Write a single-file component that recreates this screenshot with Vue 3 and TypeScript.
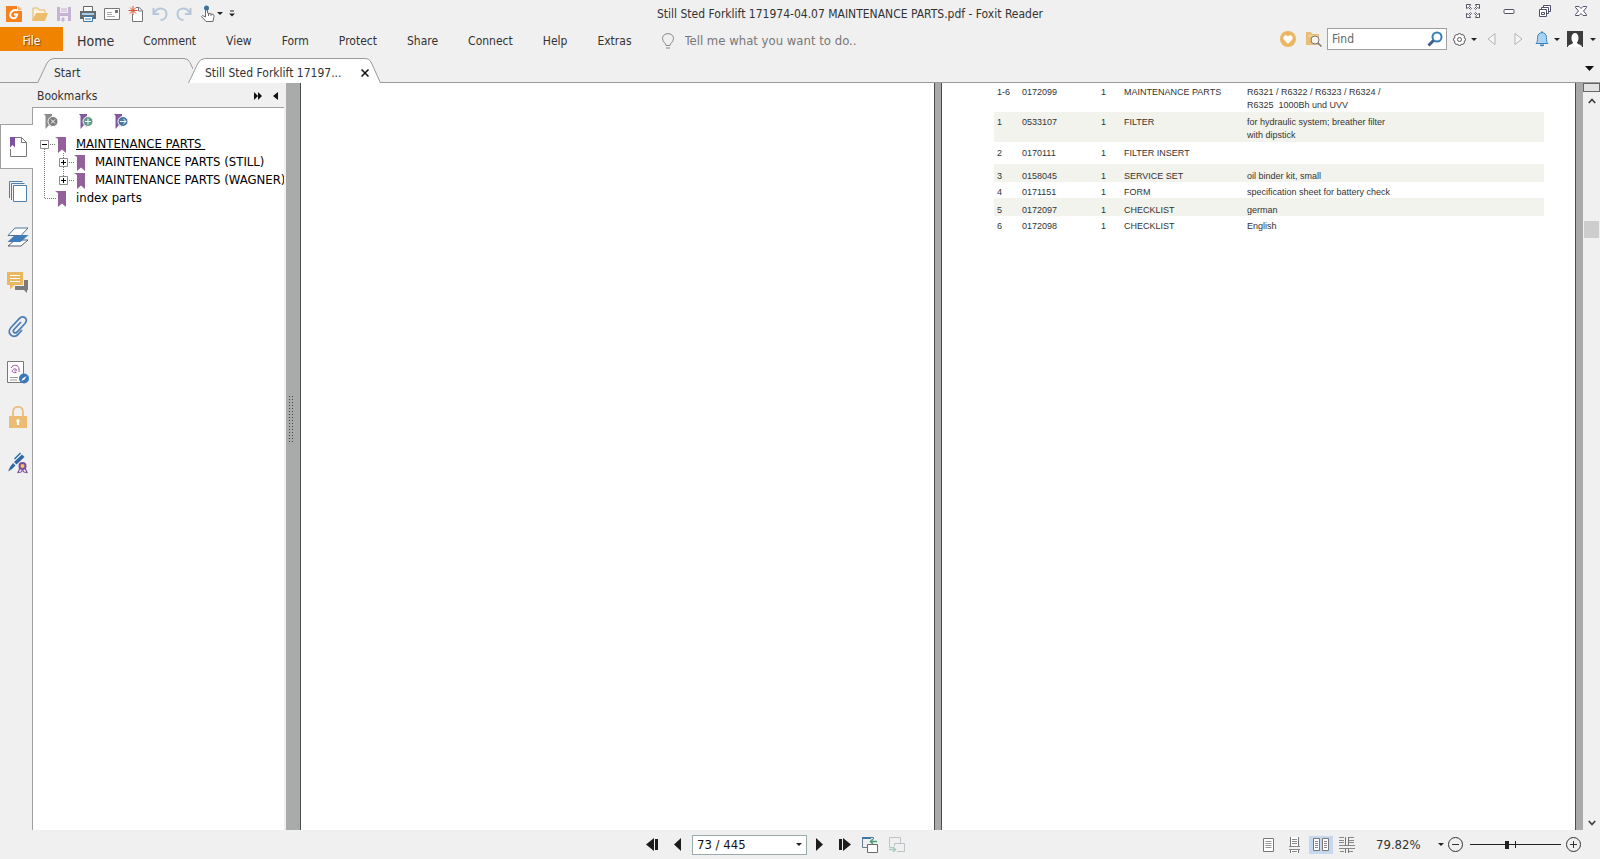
<script setup lang="ts">
import { ref } from 'vue'

interface PartRow {
  pos: string
  part: string
  qty: string
  name: string
  note: string[]
  size: string
}

const menus = ['Comment', 'View', 'Form', 'Protect', 'Share', 'Connect', 'Help', 'Extras']
const tell = ref('')
const find = ref('')
const zoom = ref(40)

const parts: PartRow[] = [
  { pos: '1-6', part: '0172099', qty: '1', name: 'MAINTENANCE PARTS', note: ['R6321 / R6322 / R6323 / R6324 /', 'R6325  1000Bh und UVV'], size: 'first' },
  { pos: '1', part: '0533107', qty: '1', name: 'FILTER', note: ['for hydraulic system; breather filter', 'with dipstick'], size: 'double' },
  { pos: '2', part: '0170111', qty: '1', name: 'FILTER INSERT', note: [], size: 'tall' },
  { pos: '3', part: '0158045', qty: '1', name: 'SERVICE SET', note: ['oil binder kit, small'], size: 'single' },
  { pos: '4', part: '0171151', qty: '1', name: 'FORM', note: ['specification sheet for battery check'], size: 'tight' },
  { pos: '5', part: '0172097', qty: '1', name: 'CHECKLIST', note: ['german'], size: 'single' },
  { pos: '6', part: '0172098', qty: '1', name: 'CHECKLIST', note: ['English'], size: 'tight' },
]
</script>

<template>
  <div class="app">
    <header class="titlebar">
      <div class="quick">
        <span class="logo">
          <svg width="18" height="18" viewBox="0 0 18 18"><path d="M1 1h11v5h5v11H1z" fill="#f58220" /><path d="M13 1l4 4h-4z" fill="#f9b377" /><path d="M12 5.200C8 4.600 5.200 7 5.200 10s3 4 5.300 2.600c1.200-.8 1.600-2.100 1.700-3.100H9" fill="none" stroke="#fff" stroke-width="2" /></svg>
        </span>
        <button class="tool" aria-label="Open"><svg width="18" height="18" viewBox="0 0 18 18"><path d="M2 15V3h5l1 2h6v3" fill="#fdf3df" stroke="#e5b667" /><path d="M1 16L5 8h12l-3 8z" fill="#ebbd6c" /></svg></button>
        <button class="tool" aria-label="Save"><svg width="16" height="16" viewBox="0 0 16 16"><path d="M1 1h14v14H1z" fill="#c6b3d3" /><path d="M4 1h8v6H4zM4 10h8v5H4z" fill="#f1edf4" /><path d="M5 3h6M5 5h6M6 12h2v3H6z" stroke="#c6b3d3" fill="#c6b3d3" /></svg></button>
        <button class="tool" aria-label="Print"><svg width="18" height="18" viewBox="0 0 18 18"><path d="M4.500 6V1.500h9V6" fill="#fff" stroke="#666" /><path d="M1 6h16v8H1z" fill="#666b70" /><path d="M3 8h12v2H3z" fill="#9fd0ee" /><path d="M4.500 11.500h9v5h-9z" fill="#fff" stroke="#3b78a8" /><path d="M6 14h6" stroke="#3b78a8" /></svg></button>
        <button class="tool" aria-label="Email"><svg width="16" height="14" viewBox="0 0 16 14"><path d="M.5 1.500h15v11H.5z" fill="#fff" stroke="#777" /><path d="M11 3h3v3h-3z" fill="#777" /><path d="M3 5.500h5M3 7.500h5M3 9.500h8" stroke="#aaa" /></svg></button>
        <button class="tool" aria-label="New from blank"><svg width="16" height="18" viewBox="0 0 16 18"><path d="M4.500 9v7.500h10V5.500L11 2.500H8" fill="#fff" stroke="#777" /><path d="M10.500 2.500V6h4" fill="none" stroke="#777" /><path d="M5 1v9M.5 5.500h9M2 2.500l6 6M8 2.500l-6 6" stroke="#d9502f" /></svg></button>
        <button class="tool" aria-label="Undo"><svg width="16" height="16" viewBox="0 0 16 16"><path d="M2 7C6 0 14.500 2 14.500 8c0 4-3 6-6 6" fill="none" stroke="#b4c6d8" stroke-width="2" /><path d="M1.500 2v6H7" fill="none" stroke="#b4c6d8" stroke-width="2" /></svg></button>
        <button class="tool" aria-label="Redo"><svg width="16" height="16" viewBox="0 0 16 16"><path d="M14 7C10 0 1.500 2 1.500 8c0 4 3 6 6 6" fill="none" stroke="#b4c6d8" stroke-width="2" /><path d="M14.500 2v6H9" fill="none" stroke="#b4c6d8" stroke-width="2" /></svg></button>
        <button class="tool" aria-label="Hand tool"><svg width="16" height="18" viewBox="0 0 16 18"><path d="M5.500 12V3.500q1-1.500 2 0V8l5.500 1.500q1.500.5 1 2l-1 5H6L1.500 11.500q.5-1.500 2-.5z" fill="#fff" stroke="#6c6c6c" /><path d="M8.500 8v3M11 9v2" stroke="#6c6c6c" /><circle cx="6.500" cy="3" r="2.500" fill="#39729e" /></svg></button>
        <button class="caret" aria-label="Hand tool options"><i class="down"></i></button>
        <button class="caret customize" aria-label="Customize toolbar"><svg width="6" height="7" viewBox="0 0 6 7"><path d="M1 1h4" stroke="#222" /><path d="M0 3.500h6L3 6.500z" fill="#222" /></svg></button>
      </div>
      <h1>Still Sted Forklift 171974-04.07 MAINTENANCE PARTS.pdf - Foxit Reader</h1>
      <div class="window-buttons">
        <button aria-label="Full screen"><svg width="14" height="14" viewBox="0 0 14 14"><g fill="#fff" stroke="#55556a"><path d="M.5.500h4L3.500 2.500l2 2-1 1-2-2-2 1zM13.500.500h-4l1 2-2 2 1 1 2-2 2 1zM.5 13.500h4l-1-2 2-2-1-1-2 2-2-1zM13.500 13.500h-4l1-2-2-2 1-1 2 2 2-1z" /></g></svg></button>
        <button aria-label="Minimize"><svg width="12" height="14" viewBox="0 0 12 14"><rect x="1" y="5.500" width="10" height="4" rx="1" fill="#fff" stroke="#50506a" /></svg></button>
        <button aria-label="Restore"><svg width="12" height="12" viewBox="0 0 12 12"><path d="M4.500 4V.5h7v6H8" fill="#fff" stroke="#50506a" /><path d="M2.500 5V2.500h7v6H8" fill="#fff" stroke="#50506a" /><path d="M.5 4.500h7v7h-7z" fill="#fff" stroke="#50506a" /><path d="M2.500 7.500h3v2h-3z" fill="none" stroke="#50506a" /></svg></button>
        <button aria-label="Close"><svg width="12" height="12" viewBox="0 0 12 12"><path d="M.5 1.500h3.500L6 3.500l2-2h3.500v1L8.500 6l3 3.500v1H8L6 8.500l-2 2H.5v-1L3.500 6l-3-3.500z" fill="#fff" stroke="#50506a" /></svg></button>
      </div>
    </header>

    <nav class="ribbon">
      <button class="file">File</button>
      <button class="home">Home</button>
      <button v-for="m in menus" :key="m" class="menu">{{ m }}</button>
      <label class="tell">
        <svg width="12" height="16" viewBox="0 0 12 16"><path d="M4 12.500C4 10 .5 9 .5 5.500c0-6.500 11-6.500 11 0C11.500 9 8 10 8 12.500zM4 15h4" fill="none" stroke="#888" /></svg>
        <input v-model="tell" type="text" placeholder="Tell me what you want to do.." />
      </label>
      <div class="ribbon-right">
        <button class="heart" aria-label="Favourites"><svg width="16" height="16" viewBox="0 0 16 16"><circle cx="8" cy="8" r="8" fill="#ebb660" /><path d="M8 13L3.800 8.500C2 6 5.500 2.500 8 5.500c2.500-3 6 .5 4.200 3z" fill="#fff" /></svg></button>
        <button class="folder" aria-label="Search folder"><svg width="17" height="16" viewBox="0 0 17 16"><path d="M1 1h5l1 2h7v11H1z" fill="#e9bd74" /><path d="M3 5h10" stroke="#f6e0b8" /><circle cx="10" cy="9" r="4" fill="#f4f4f4" stroke="#777" /><path d="M13 12l3.500 3.500" stroke="#777" stroke-width="1.500" /></svg></button>
        <label class="find">
          <input v-model="find" type="text" placeholder="Find" aria-label="Find" />
          <svg width="16" height="16" viewBox="0 0 16 16"><circle cx="10" cy="6" r="4.500" fill="#fff" stroke="#3580b2" stroke-width="2" /><path d="M6.500 9.500L1.500 14.500" stroke="#3b5f86" stroke-width="3" /></svg>
        </label>
        <button class="gear" aria-label="Settings"><svg width="15" height="15" viewBox="0 0 15 15"><path d="M12.100 9.400A2 2 0 0 1 9.400 12.100A2 2 0 0 1 5.600 12.100A2 2 0 0 1 2.900 9.400A2 2 0 0 1 2.900 5.600A2 2 0 0 1 5.600 2.900A2 2 0 0 1 9.400 2.900A2 2 0 0 1 12.100 5.600A2 2 0 0 1 12.100 9.400z" fill="#fff" stroke="#444" /><circle cx="7.500" cy="7.500" r="2" fill="none" stroke="#555" /></svg><i class="down"></i></button>
        <button class="step" aria-label="Previous result"><svg width="9" height="14" viewBox="0 0 9 14"><path d="M8 1.500v11L1 7z" fill="#f6f6f6" stroke="#b4b4b4" /></svg></button>
        <button class="step" aria-label="Next result"><svg width="9" height="14" viewBox="0 0 9 14"><path d="M1 1.500v11L8 7z" fill="#f6f6f6" stroke="#b4b4b4" /></svg></button>
        <button class="bell" aria-label="Notifications"><svg width="14" height="16" viewBox="0 0 14 16"><path d="M1 12.500c1.500-1 1.500-3 1.500-6C2.500 0 11.500 0 11.500 6.500c0 3 0 5 1.500 6z" fill="#a8d3f2" stroke="#3d83b9" /><path d="M5 14q2 2 4 0zM6 1h2" fill="#3d83b9" stroke="#3d83b9" /></svg><i class="down"></i></button>
        <button class="user" aria-label="Account"><svg width="16" height="16" viewBox="0 0 16 16"><path d="M0 0h16v16H0z" fill="#3d3d3d" /><path d="M1 16c0-3 5-2 5-4.500C3.500 9 4 2 8 2s4.500 7 2 9.500C10 14 15 13 15 16z" fill="#fff" /></svg><i class="down"></i></button>
      </div>
    </nav>

    <div class="tabs" role="tablist">
      <button class="tab start" role="tab">
        <svg class="shape" width="156" height="25" viewBox="0 0 156 25"><path d="M.5 25L10 5Q12.500.5 17 .5h130q5 0 7.500 6l1.500 4V25z" fill="#f0f0f0" /><path d="M.5 25L10 5Q12.500.5 17 .5h130q4 0 6 4l3 6.500" fill="none" stroke="#9a9a9a" /></svg>
        <span>Start</span>
      </button>
      <div class="tab active" role="tab">
        <svg class="shape" width="194" height="25" viewBox="0 0 194 25"><path d="M.5 25L10 5Q12.500.5 17 .5h160q4.500 0 6.500 4.500l9 20" fill="#fff" stroke="#9a9a9a" /></svg>
        <span>Still Sted Forklift 17197...</span>
        <button class="close" aria-label="Close tab"><svg width="8" height="8" viewBox="0 0 8 8"><path d="M.5.5l7 7M7.500.5l-7 7" stroke="#111" stroke-width="1.500" /></svg></button>
      </div>
      <button class="tab-list" aria-label="Tab list"><svg width="9" height="5" viewBox="0 0 9 5"><path d="M0 0h9L4.500 5z" fill="#111" /></svg></button>
    </div>

    <main class="body">
      <aside class="side">
        <div class="side-head">
          <h2>Bookmarks</h2>
          <button aria-label="Expand panel"><svg width="8" height="8" viewBox="0 0 8 8"><path d="M0 0l4 4-4 4zM4 0l4 4-4 4z" fill="#111" /></svg></button>
          <button aria-label="Hide panel"><svg width="5" height="8" viewBox="0 0 5 8"><path d="M5 0v8L0 4z" fill="#111" /></svg></button>
        </div>
        <div class="side-body">
          <div class="rail">
            <button class="on" aria-label="Bookmarks"><svg width="18" height="22" viewBox="0 0 18 22"><path d="M6 1.500h6.500l5 5v14H1.500V13" fill="#fff" stroke="#777" /><path d="M12.500 1.500v5h5" fill="none" stroke="#777" /><path d="M1 1h5v10.500L3.500 9 1 11.500z" fill="#7f52a0" /></svg></button>
            <button aria-label="Pages"><svg width="18" height="22" viewBox="0 0 18 22"><path d="M.5 17V.5h13M2.500 19V2.500h13" fill="none" stroke="#4f7faa" /><path d="M4.500 4.500h13v16h-13z" fill="#fff" stroke="#4f7faa" /></svg></button>
            <button aria-label="Layers"><svg width="22" height="20" viewBox="0 0 22 20"><path d="M8 13h13l-7 6H1z" fill="#fff" stroke="#555f70" /><path d="M8 8h13.500l-8 7H.5z" fill="#3e7db8" /><path d="M8 1h13l-7 7.500H1z" fill="#fff" stroke="#4d7499" /></svg></button>
            <button aria-label="Comments"><svg width="22" height="22" viewBox="0 0 22 22"><path d="M17 9h4v10h-1v3l-3-3H8v-4h9z" fill="#7a7a7a" /><path d="M0 1h16v13H7.500L3 18.500V14H0z" fill="#ebb762" /><path d="M3 4.500h10M3 7.500h10M3 10.500h10" stroke="#fff" /></svg></button>
            <button aria-label="Attachments"><svg width="20" height="22" viewBox="0 0 20 22"><path d="M13 6L6 13.500c-2 2.500 1 4.500 3 2.500l8-8.500c4-5-2-8.500-5.500-5L3 11.500c-5 5.500 2 12 7 7l4-4.500" fill="none" stroke="#4b7fb5" stroke-width="1.800" /></svg></button>
            <button aria-label="Signatures"><svg width="22" height="24" viewBox="0 0 22 24"><path d="M.5 1.500h16v21H.5z" fill="#fff" stroke="#777" /><path d="M4 8c2-4 8-3.500 8 1v3M9.500 12.500c-4 .5-5-1-4-2.500s4-1.500 4 0-1.500 1-2 .5" fill="none" stroke="#96569d" /><path d="M3 17.500h8M3 20h7" stroke="#999" /><circle cx="17" cy="18.500" r="5" fill="#3b78b5" /><path d="M14.500 21l1-2.500 4-2.500-2 3.500z" fill="#fff" /></svg></button>
            <button aria-label="Security"><svg width="18" height="24" viewBox="0 0 18 24"><path d="M4 12V7c0-7 10-7 10 0v5" fill="none" stroke="#e9c183" stroke-width="2" /><path d="M0 11h18v12H0z" fill="#ebbc72" /><path d="M9 14a2 2 0 0 1 1 3.500V20H8v-2.500A2 2 0 0 1 9 14z" fill="#fff" /></svg></button>
            <button aria-label="Digital signature"><svg width="22" height="24" viewBox="0 0 22 24"><path d="M15 4.500l2.500 2.500L9.500 14.500 7 12z" fill="#2e68a8" /><path d="M7.500 9L13.500 3" stroke="#2e68a8" stroke-width="1.500" /><path d="M6 13l2.500 2.500L5 19l-4 2.500L3 17z" fill="#2e68a8" /><path d="M13 18l-2 4.500 3-.5 1.500-2 1.500 2 3 .5-2-4.500" fill="#fff" stroke="#7b4e9b" stroke-width="1.200" /><circle cx="15.500" cy="16" r="3" fill="#f3c56b" stroke="#7b4e9b" stroke-width="2" /></svg></button>
          </div>
          <div class="panel">
            <div class="panel-tools">
              <button aria-label="Delete bookmark"><svg width="15" height="16" viewBox="0 0 15 16"><path d="M0 0h8v13l-3-2-3.500 4V2z" fill="#8a8a8a" /><circle cx="9" cy="7.500" r="5" fill="#7d7d7d" stroke="#fff" /><path d="M7 5.500l4 4M11 5.500l-4 4" stroke="#fff" /></svg></button>
              <button aria-label="Add bookmark"><svg width="15" height="16" viewBox="0 0 15 16"><path d="M0 0h8v13l-3-2-3.500 4V2z" fill="#8257a0" /><circle cx="9" cy="7.500" r="5" fill="#5e9c85" stroke="#fff" /><path d="M6 7.500h6M9 4.500v6" stroke="#fff" /></svg></button>
              <button aria-label="Go to bookmark"><svg width="15" height="16" viewBox="0 0 15 16"><path d="M0 0h8v13l-3-2-3.500 4V2z" fill="#8257a0" /><circle cx="9" cy="7.500" r="5" fill="#4677a5" stroke="#fff" /><path d="M6 7.500h6M9.500 5l2.500 2.500L9.500 10" stroke="#fff" fill="none" /></svg></button>
            </div>
            <ul class="tree">
              <li>
                <svg width="36" height="18" viewBox="0 0 36 18"><path d="M11.500 14v4M17 9.500h6" class="dots" /><path d="M7.500 5.500h8v8h-8z" class="box" /><path d="M9 9.500h5" class="sign" /><path d="M22 2h11v16l-4-3.500-4 3.500V4z" class="mark" /></svg>
                <a href="#parts" class="current">MAINTENANCE PARTS&nbsp;</a>
              </li>
              <li>
                <svg width="55" height="18" viewBox="0 0 55 18"><path d="M11.500 0v18M30.500 0v5M30.500 14v4M36 9.500h6" class="dots" /><path d="M26.500 5.500h8v8h-8z" class="box" /><path d="M28 9.500h5M30.500 7v5" class="sign" /><path d="M41 2h11v16l-4-3.500-4 3.500V4z" class="mark" /></svg>
                <a href="#still">MAINTENANCE PARTS (STILL)</a>
              </li>
              <li>
                <svg width="55" height="18" viewBox="0 0 55 18"><path d="M11.500 0v18M30.500 0v5M36 9.500h6" class="dots" /><path d="M26.500 5.500h8v8h-8z" class="box" /><path d="M28 9.500h5M30.500 7v5" class="sign" /><path d="M41 2h11v16l-4-3.500-4 3.500V4z" class="mark" /></svg>
                <a href="#wagner">MAINTENANCE PARTS (WAGNER)</a>
              </li>
              <li>
                <svg width="36" height="18" viewBox="0 0 36 18"><path d="M11.500 0v9M12 9.500h11" class="dots" /><path d="M22 2h11v16l-4-3.500-4 3.500V4z" class="mark" /></svg>
                <a href="#index">index parts</a>
              </li>
            </ul>
          </div>
        </div>
      </aside>
      <div class="splitter"><svg width="5" height="50" viewBox="0 0 5 50"><path d="M.5 2v46M3.500 2v46" stroke="#444" stroke-dasharray="1 2" /></svg></div>
      <section class="page"></section>
      <div class="gutter"></div>
      <section class="page">
        <div class="sheet">
          <table>
            <tbody>
              <tr v-for="r in parts" :key="r.pos" :class="r.size">
                <td class="c-pos">{{ r.pos }}</td>
                <td class="c-part">{{ r.part }}</td>
                <td class="c-qty">{{ r.qty }}</td>
                <td class="c-name">{{ r.name }}</td>
                <td><div v-for="n in r.note" :key="n">{{ n }}</div></td>
              </tr>
            </tbody>
          </table>
        </div>
      </section>
      <div class="edge"></div>
      <div class="scroll">
        <button class="split" aria-label="Split view"></button>
        <button class="arrow" aria-label="Scroll up"><svg width="8" height="6" viewBox="0 0 8 6"><path d="M.8 5L4 1.500 7.200 5" fill="none" stroke="#444" stroke-width="1.800" /></svg></button>
        <div class="track"><div class="thumb"></div></div>
        <button class="arrow" aria-label="Scroll down"><svg width="8" height="6" viewBox="0 0 8 6"><path d="M.8 1L4 4.500 7.200 1" fill="none" stroke="#444" stroke-width="1.800" /></svg></button>
      </div>
    </main>

    <footer class="status">
      <div class="pager">
        <button class="nav" aria-label="First page"><svg width="12" height="13" viewBox="0 0 12 13"><path d="M8 0v13L0 6.500zM9 1h3v11H9z" fill="#1c1c1c" /><path d="M8.500 0v13" stroke="#f0f0f0" /></svg></button>
        <button class="nav" aria-label="Previous page"><svg width="7" height="13" viewBox="0 0 7 13"><path d="M7 0v13L0 6.500z" fill="#1c1c1c" /></svg></button>
        <span class="combo pages"><select aria-label="Page"><option>73 / 445</option></select><i class="down"></i></span>
        <button class="nav" aria-label="Next page"><svg width="7" height="13" viewBox="0 0 7 13"><path d="M0 0v13l7-6.500z" fill="#1c1c1c" /></svg></button>
        <button class="nav" aria-label="Last page"><svg width="12" height="13" viewBox="0 0 12 13"><path d="M4 0v13l8-6.500zM0 1h3v11H0z" fill="#1c1c1c" /></svg></button>
        <button class="view" aria-label="Previous view"><svg width="16" height="16" viewBox="0 0 16 16"><path d="M5 10.500H.5v-10h11V2" fill="none" stroke="#6b7d8c" /><path d="M0 1h9" stroke="#3d79a8" stroke-width="2" /><path d="M5.500 7.500h10v8h-10z" fill="#fff" stroke="#6a6a6a" /><path d="M15 4.500H9M11 2L8.500 4.500 11 7" fill="none" stroke="#4c9c7c" stroke-width="1.500" /></svg></button>
        <button class="view" aria-label="Next view"><svg width="16" height="16" viewBox="0 0 16 16"><path d="M4 10.500H.5v-10h11V6" fill="none" stroke="#bcc3c9" /><path d="M8 14.500h7.500v-8H5.500V9" fill="none" stroke="#bcc3c9" /><path d="M0 12.500h6M4 10l2.500 2.500L4 15" fill="none" stroke="#a9cbbd" stroke-width="1.500" /></svg></button>
      </div>
      <div class="zooming">
        <button class="mode" aria-label="Single page"><svg width="12" height="14" viewBox="0 0 12 14"><path d="M.5.500h10v13H.5z" fill="#fff" stroke="#777" /><path d="M2.500 3.500h6M2.500 5.500h6M2.500 7.500h6M2.500 9.500h6" stroke="#999" /></svg></button>
        <button class="mode" aria-label="Continuous"><svg width="12" height="16" viewBox="0 0 12 16"><path d="M1.500 0v9.500h8V0M1.500 16v-3.500h8V16" fill="#fff" stroke="#777" /><path d="M0 9.500h11M0 12.500h11M3 2.500h5M3 4.500h5M3 6.500h5M3 14.500h5" stroke="#888" /></svg></button>
        <button class="mode on" aria-label="Facing"><svg width="16" height="14" viewBox="0 0 16 14"><path d="M.5.500h6v12h-6zM9.500.500h6v12h-6z" fill="#fff" stroke="#777" /><path d="M2 3.500h3M2 5.500h3M2 7.500h3M2 9.500h3M11 3.500h3M11 5.500h3M11 7.500h3M11 9.500h3" stroke="#888" /></svg></button>
        <button class="mode" aria-label="Continuous facing"><svg width="16" height="16" viewBox="0 0 16 16"><path d="M0 .5h5M0 3.500h5M0 5.500h5M10 .5h5M10 3.500h5M10 5.500h5M0 8.500h16M0 11.500h16M1 14.500h4M10 14.500h4" stroke="#888" /><path d="M6.500 0v8.500M9.500 0v8.500M6.500 11.500V16M9.500 11.500V16" stroke="#777" /></svg></button>
        <span class="combo percent"><select aria-label="Zoom"><option>79.82%</option></select><i class="down"></i></span>
        <button class="round" aria-label="Zoom out"><svg width="15" height="15" viewBox="0 0 15 15"><circle cx="7.500" cy="7.500" r="7" fill="none" stroke="#333" /><path d="M4 7.500h7" stroke="#333" /></svg></button>
        <input v-model.number="zoom" type="range" min="0" max="100" aria-label="Zoom level" />
        <button class="round" aria-label="Zoom in"><svg width="15" height="15" viewBox="0 0 15 15"><circle cx="7.500" cy="7.500" r="7" fill="none" stroke="#333" /><path d="M4 7.500h7M7.500 4v7" stroke="#333" /></svg></button>
      </div>
    </footer>
  </div>
</template>

<style>
body {
  margin: 0;
}
</style>

<style scoped>
.app {
  height: 100vh;
  display: flex;
  flex-direction: column;
  background: #f0f0f0;
  color: #333;
  font: 12px/16px "DejaVu Sans Condensed", "DejaVu Sans", sans-serif;
  overflow: hidden;
}
button,
select,
input {
  font: inherit;
  color: inherit;
  border: 0;
  padding: 0;
  margin: 0;
  background: none;
}
button {
  display: flex;
  align-items: center;
  justify-content: center;
}
h1,
h2 {
  margin: 0;
  font-size: 12px;
  font-weight: normal;
}
svg {
  display: block;
  flex: none;
}
.down {
  border: 3px solid transparent;
  border-top-color: #222;
  border-bottom: 0;
}

.titlebar {
  height: 27px;
  display: flex;
  align-items: center;
}
.quick {
  display: flex;
  align-items: center;
}
.logo {
  width: 28px;
  display: flex;
  justify-content: center;
}
.tool {
  width: 24px;
  height: 24px;
}
.caret {
  width: 6px;
  margin-left: -3px;
}
.customize {
  width: 18px;
  height: 16px;
  margin-left: 0;
}
.titlebar h1 {
  flex: 1;
  text-align: center;
  padding-left: 4px;
}
.window-buttons {
  display: flex;
  padding: 0 1px 5px 0;
}
.window-buttons button {
  width: 36px;
  height: 20px;
}

.ribbon {
  height: 31px;
  display: flex;
  align-items: flex-start;
}
.ribbon > button {
  height: 27px;
  padding: 0 15px;
}
.ribbon > .file {
  width: 63px;
  height: 24px;
  padding: 3px 0 0;
  background: #f08300;
  color: #fff;
  text-shadow: 1px 1px 1px #7a4a10;
}
.ribbon > .home {
  font-size: 14px;
  padding: 0 14px;
}
.tell {
  height: 27px;
  display: flex;
  align-items: center;
  gap: 11px;
  padding-left: 15px;
  font-size: 13px;
}
.tell input {
  width: 200px;
}
.tell input::placeholder {
  color: #777;
  opacity: 1;
}
.ribbon-right {
  height: 24px;
  margin-left: auto;
  display: flex;
  align-items: center;
}
.heart {
  margin-right: 9px;
}
.folder {
  margin-right: 5px;
}
.find {
  width: 120px;
  height: 22px;
  box-sizing: border-box;
  border: 1px solid #a0a0a0;
  background: #fff;
  display: flex;
  align-items: center;
  padding: 0 3px 0 4px;
}
.find input {
  flex: 1;
  min-width: 0;
}
.find input::placeholder {
  color: #666;
  opacity: 1;
}
.bell {
  gap: 5px;
  margin: 0 7px 0 3px;
}
.gear {
  gap: 4px;
  margin: 0 1px 0 5px;
}
.step {
  width: 27px;
}
.user {
  gap: 7px;
  padding-right: 4px;
}

.tabs {
  height: 24px;
  padding-left: 37px;
  border-bottom: 1px solid #9a9a9a;
  display: flex;
}
.tab {
  position: relative;
  height: 25px;
  display: flex;
  align-items: center;
  justify-content: flex-start;
}
.tab .shape {
  position: absolute;
  left: 0;
  top: 0;
}
.tab span {
  position: relative;
  padding-top: 4px;
}
.start {
  width: 151px;
  padding-left: 17px;
}
.active {
  width: 194px;
  padding-left: 17px;
  box-sizing: border-box;
}
.close {
  position: relative;
  margin: 4px 13px 0 auto;
}
.tab-list {
  margin-left: auto;
  padding: 0 6px 4px 0;
}

.body {
  flex: 1;
  min-height: 0;
  display: flex;
}
.side {
  width: 284px;
  display: flex;
  flex-direction: column;
}
.side-head {
  height: 24px;
  box-sizing: border-box;
  display: flex;
  align-items: center;
  gap: 11px;
  padding: 1px 6px 0 37px;
}
.side-head h2 {
  flex: 1;
}
.side-body {
  flex: 1;
  display: flex;
}
.rail {
  width: 32px;
  padding-top: 17px;
}
.rail button {
  width: 33px;
  height: 45px;
  padding-left: 3px;
  box-sizing: border-box;
}
.rail .on {
  background: #fff;
  border: 1px solid #a0a0a0;
  border-right: 0;
  padding-left: 2px;
  position: relative;
}
.panel {
  flex: 1;
  background: #fff;
  border-top: 1px solid #a0a0a0;
  border-left: 1px solid #a0a0a0;
}
.panel-tools {
  display: flex;
  gap: 20px;
  padding: 6px 0 5px 11px;
}
.tree {
  list-style: none;
  margin: 0;
  padding: 0;
  color: #000;
  font-size: 13px;
}
.tree li {
  height: 18px;
  display: flex;
  align-items: center;
  gap: 7px;
  white-space: nowrap;
}
.tree a {
  color: inherit;
  text-decoration: none;
}
.tree .current {
  text-decoration: underline;
}
.dots {
  stroke: #777;
  stroke-dasharray: 1 1;
}
.box {
  fill: #fff;
  stroke: #8c8c8c;
}
.sign {
  stroke: #000;
}
.mark {
  fill: #93609b;
}
.splitter {
  width: 14px;
  background: #a9abaa;
  border-left: 2px solid #f0f0f0;
  border-right: 1px solid #4c4c4c;
  display: flex;
  align-items: center;
  padding-bottom: 76px;
}
.splitter svg {
  margin-left: 3px;
}
.page {
  flex: 1;
  min-width: 0;
  background: #fff;
}
.gutter {
  width: 6px;
  background: #a9abaa;
  border-left: 1px solid #4c4c4c;
  border-right: 1px solid #4c4c4c;
}
.edge {
  width: 7px;
  background: #a9a9a9;
  border-left: 1px solid #4c4c4c;
}
.sheet {
  padding: 0 31px 0 52px;
}
table {
  width: 100%;
  border-collapse: collapse;
  table-layout: fixed;
  font: 9px/12px "Liberation Sans", Arial, sans-serif;
}
td {
  padding: 6px 0 0;
  vertical-align: top;
  white-space: pre;
}
tr:nth-child(even) td {
  background: #f2f3ed;
}
.c-pos {
  width: 25px;
  padding-left: 3px;
}
.c-part {
  width: 79px;
}
.c-qty {
  width: 23px;
}
.c-name {
  width: 123px;
}
.first,
.double {
  line-height: 13px;
}
.first td {
  padding-top: 3px;
}
.double td {
  padding-top: 4px;
}
.tall {
  height: 22px;
}
.tall td {
  padding-top: 5px;
}
.tight td {
  padding-top: 4px;
}
.scroll {
  width: 17px;
  display: flex;
  flex-direction: column;
}
.split {
  height: 9px;
  border: 1px solid #666;
  background: #e2e2e2;
}
.arrow {
  height: 16px;
  padding-top: 2px;
}
.track {
  flex: 1;
  padding: 0 1px;
}
.thumb {
  height: 17px;
  margin-top: 113px;
  background: #cdcdcd;
}

.status {
  height: 29px;
  display: flex;
  align-items: center;
  justify-content: space-between;
  padding: 0 19px 0 646px;
}
.pager,
.zooming {
  display: flex;
  align-items: center;
}
.nav + .nav {
  margin-left: 16px;
}
.combo {
  position: relative;
  display: flex;
  align-items: center;
  font-size: 13px;
}
.combo select {
  appearance: none;
  width: 100%;
}
.combo .down {
  position: absolute;
  right: 4px;
}
.pages {
  width: 115px;
  height: 20px;
  box-sizing: border-box;
  margin: 0 9px 0 11px;
  padding-left: 4px;
  background: #fff;
  border: 1px solid #9aa;
  color: #111;
}
.view {
  margin-left: 11px;
}
.mode {
  width: 24px;
  height: 18px;
}
.mode + .mode {
  margin-left: 2px;
}
.mode.on {
  background: #c5d8ef;
}
.percent {
  width: 68px;
  margin: 0 4px 0 17px;
}
.percent .down {
  right: 0;
}
.zooming input {
  appearance: none;
  width: 91px;
  height: 15px;
  margin: 0 5px 0 7px;
  background: linear-gradient(#222, #222) 45px 4px / 1px 7px no-repeat, linear-gradient(#222, #222) 0 7px / 100% 1px no-repeat;
}
.zooming input::-webkit-slider-thumb {
  appearance: none;
  width: 4px;
  height: 8px;
  background: #222;
}
</style>
